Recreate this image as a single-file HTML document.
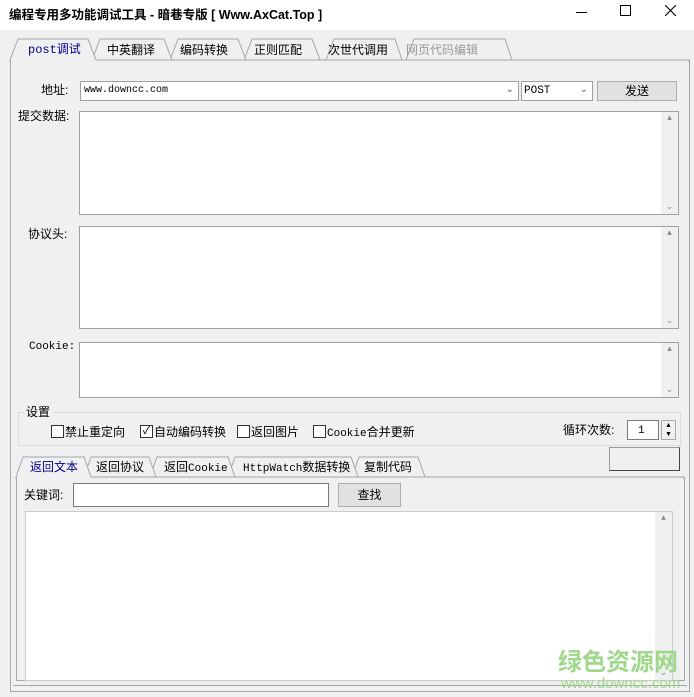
<!DOCTYPE html>
<html><head><meta charset="utf-8"><style>
*{box-sizing:border-box;margin:0;padding:0}
body{width:694px;height:697px;background:#f0f0f0;position:relative;overflow:hidden;font-family:"Liberation Sans","Noto Sans CJK SC",sans-serif;font-size:12px;color:#000}
.a{position:absolute}
.box{position:absolute;background:#fff;border:1px solid #a0a0a0}
.lbl{position:absolute;font-size:12px;line-height:14px;white-space:nowrap}
.mono{font-family:"Liberation Mono","Noto Sans CJK SC",monospace;font-size:11px}
.btn{position:absolute;background:#e1e1e1;border:1px solid #adadad;text-align:center;font-size:12px}
.cb{position:absolute;width:13px;height:13px;border:1px solid #333;background:#fff}
.sb{position:absolute;right:0;top:0;bottom:0;width:17px;background:#f0f0f0;color:#888;font-size:9px;text-align:center}
.chev{position:absolute;color:#666;font-size:10px}
</style></head><body>
<div class="a" style="left:0;top:0;width:694px;height:30px;background:#fff"></div>
<div class="lbl" style="left:9px;top:8px;font-weight:bold;font-size:12.5px">编程专用多功能调试工具 - 暗巷专版 [ Www.AxCat.Top ]</div>
<div class="a" style="left:576px;top:12px;width:11px;height:1px;background:#000"></div>
<div class="a" style="left:620px;top:5px;width:11px;height:11px;border:1px solid #000"></div>
<svg class="a" style="left:665px;top:5px" width="11" height="11"><path d="M0 0L11 11M11 0L0 11" stroke="#000" stroke-width="1.1"/></svg>

<svg class="a" style="left:0;top:36px" width="694" height="26">
<g fill="#f0f0f0" stroke="#a0a8b0">
<path d="M406 24 L414 3 L505 3 L512 24"/>
<path d="M326 24 L334 3 L395 3 L402 24"/>
<path d="M244 24 L252 3 L312 3 L320 24"/>
<path d="M170 24 L178 3 L238 3 L246 24"/>
<path d="M92 24 L100 3 L164 3 L172 24"/>
</g>
<path d="M10 26 L10 24 L18 3 L88 3 L96 24 L689 24 L689 26" fill="#f0f0f0" stroke="#a0a8b0"/>
<rect x="11" y="24" width="78" height="2" fill="#f0f0f0"/>
</svg>
<div class="a" style="left:10px;top:60px;width:680px;height:632px;border:1px solid #a0a8b0;border-top:none"></div>
<div class="a" style="left:13px;top:685px;width:674px;height:1px;background:#a0a8b0"></div>
<div class="lbl mono" style="left:28px;top:43px;color:#00008b;font-size:12px">post调试</div>
<div class="lbl" style="left:107px;top:43px">中英翻译</div>
<div class="lbl" style="left:180px;top:43px">编码转换</div>
<div class="lbl" style="left:254px;top:43px">正则匹配</div>
<div class="lbl" style="left:328px;top:43px">次世代调用</div>
<div class="lbl" style="left:406px;top:43px;color:#999">网页代码编辑</div>

<div class="lbl" style="left:41px;top:83px">地址:</div>
<div class="box" style="left:80px;top:81px;width:439px;height:20px"><span class="lbl mono" style="left:3px;top:2px;font-size:10px">www.downcc.com</span><span class="chev" style="right:4px;top:2px">⌄</span></div>
<div class="box" style="left:521px;top:81px;width:72px;height:20px"><span class="lbl mono" style="left:2px;top:2px">POST</span><span class="chev" style="right:4px;top:2px">⌄</span></div>
<div class="btn" style="left:597px;top:81px;width:80px;height:20px;line-height:18px">发送</div>

<div class="lbl" style="left:18px;top:109px">提交数据:</div>
<div class="box" style="left:79px;top:111px;width:600px;height:104px"><div class="sb">▴<div style="position:absolute;bottom:2px;width:17px">⌄</div></div></div>
<div class="lbl" style="left:28px;top:227px">协议头:</div>
<div class="box" style="left:79px;top:226px;width:600px;height:103px"><div class="sb">▴<div style="position:absolute;bottom:2px;width:17px">⌄</div></div></div>
<div class="lbl mono" style="left:29px;top:340px">Cookie:</div>
<div class="box" style="left:79px;top:342px;width:600px;height:56px"><div class="sb">▴<div style="position:absolute;bottom:2px;width:17px">⌄</div></div></div>

<div class="a" style="left:18px;top:412px;width:663px;height:34px;border:1px solid #dcdcdc"></div>
<div class="lbl" style="left:24px;top:405px;background:#f0f0f0;padding:0 2px">设置</div>
<div class="cb" style="left:51px;top:425px"></div><div class="lbl" style="left:65px;top:425px">禁止重定向</div>
<div class="cb" style="left:140px;top:425px;font-size:11px;line-height:11px;text-align:center">✓</div><div class="lbl" style="left:154px;top:425px">自动编码转换</div>
<div class="cb" style="left:237px;top:425px"></div><div class="lbl" style="left:251px;top:425px">返回图片</div>
<div class="cb" style="left:313px;top:425px"></div><div class="lbl" style="left:327px;top:425px"><span class="mono">Cookie</span>合并更新</div>
<div class="lbl" style="left:563px;top:423px">循环次数:</div>
<div class="box" style="left:627px;top:420px;width:32px;height:20px;border-color:#7a7a7a"><span class="lbl mono" style="left:10px;top:3px">1</span></div>
<div class="a" style="left:661px;top:420px;width:15px;height:20px;border:1px solid #aaa;background:#f0f0f0;font-size:7px;line-height:9px;text-align:center">▲<br>▼</div>
<div class="a" style="left:609px;top:447px;width:71px;height:24px;border:1px solid #666;border-color:#999 #444 #444 #999"></div>

<svg class="a" style="left:0;top:455px" width="694" height="24">
<g fill="#f0f0f0" stroke="#a0a8b0">
<path d="M352 22 L359 2 L418 2 L425 22"/>
<path d="M228 22 L235 2 L351 2 L358 22"/>
<path d="M150 22 L157 2 L228 2 L235 22"/>
<path d="M84 22 L91 2 L149 2 L156 22"/>
</g>
<path d="M16 24 L16 22 L23 2 L84 2 L91 22 L684 22 L684 24" fill="#f0f0f0" stroke="#a0a8b0"/>
<rect x="17" y="22" width="73" height="2" fill="#f0f0f0"/>
</svg>
<div class="a" style="left:16px;top:477px;width:669px;height:204px;border:1px solid #a0a8b0;border-top:none"></div>
<div class="lbl" style="left:30px;top:460px;color:#00008b">返回文本</div>
<div class="lbl" style="left:96px;top:460px">返回协议</div>
<div class="lbl" style="left:164px;top:460px">返回<span class="mono">Cookie</span></div>
<div class="lbl" style="left:243px;top:460px"><span class="mono">HttpWatch</span>数据转换</div>
<div class="lbl" style="left:364px;top:460px">复制代码</div>

<div class="lbl" style="left:24px;top:488px">关键词:</div>
<div class="box" style="left:73px;top:483px;width:256px;height:24px;border-color:#7a7a7a"></div>
<div class="btn" style="left:338px;top:483px;width:63px;height:24px;line-height:22px">查找</div>
<div class="box" style="left:25px;top:511px;width:648px;height:170px;border-color:#ccc"><div class="sb">▴<div style="position:absolute;bottom:2px;width:17px">⌄</div></div></div>

<div class="lbl" style="left:558px;top:646px;font-size:24px;line-height:28px;font-weight:bold;color:#9fd88a;font-family:'Noto Sans CJK SC',sans-serif">绿色资源网</div>
<div class="lbl" style="left:561px;top:675px;font-size:15px;line-height:18px;color:#9fd88a">www.downcc.com</div>
</body></html>
